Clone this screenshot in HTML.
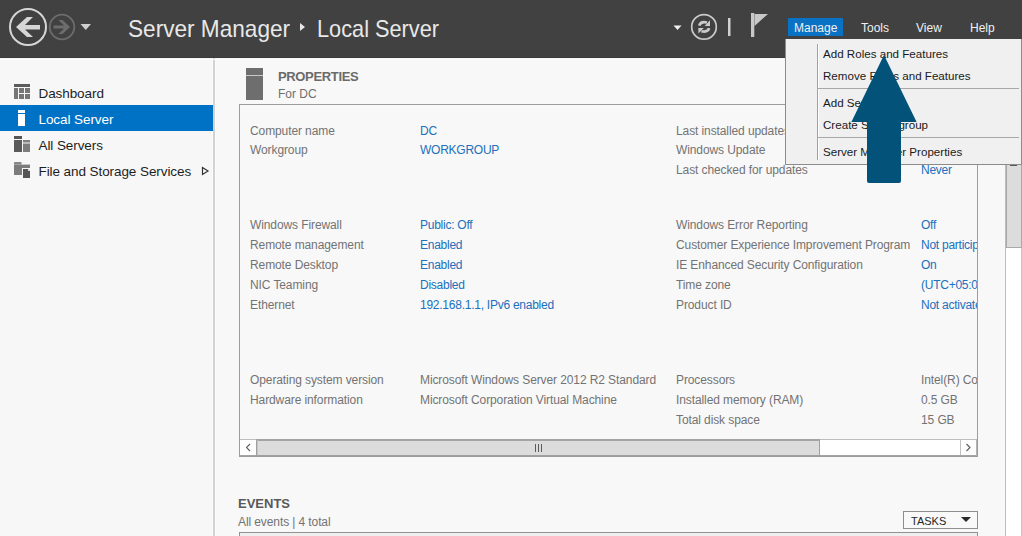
<!DOCTYPE html>
<html><head><meta charset="utf-8">
<style>
*{margin:0;padding:0;box-sizing:border-box}
html,body{width:1022px;height:536px;overflow:hidden;background:#f8f8f8;font-family:"Liberation Sans",sans-serif}
.a{position:absolute;white-space:nowrap}
#hdr{position:absolute;left:0;top:0;width:1022px;height:58px;background:#414141}
#hdrb{position:absolute;left:0;top:57px;width:1022px;height:1px;background:#3b3b3b}
#side{position:absolute;left:0;top:58px;width:213px;height:478px;background:#f7f7f7}
#sdiv{position:absolute;left:213px;top:58px;width:2px;height:478px;background:#d2d2d2}
.t{color:#e8e8e8;font-size:24px;line-height:24px}
.nav{font-size:13.5px;line-height:13.5px;letter-spacing:-0.08px;color:#1e1e1e}
.lbl{font-size:12px;line-height:12px;color:#737373;letter-spacing:-0.1px}
.val{font-size:12px;line-height:12px;color:#2070bc;letter-spacing:-0.25px}
.menu{font-size:11.6px;line-height:12px;color:#1a1a1a}
.lbl2{font-size:12px;line-height:12px;color:#737373;letter-spacing:-0.1px}
.mb{font-size:12px;line-height:12px;color:#f0f0f0}
</style></head><body>
<div id="hdr"></div><div id="hdrb"></div>
<!-- back/forward -->
<svg class="a" style="left:0;top:0" width="100" height="58">
  <circle cx="28" cy="27" r="18" fill="none" stroke="#d6d6d6" stroke-width="2"/>
  <polygon points="16,27 27,17 33,17 25,25 40,25 40,29.5 25,29.5 33,37 27,37" fill="#d6d6d6"/>
  <circle cx="62" cy="27" r="12.3" fill="none" stroke="#6c6c6c" stroke-width="1.8"/>
  <polygon points="70,27 62.6,20 58.4,20 64,25.6 53.5,25.6 53.5,28.6 64,28.6 58.4,34 62.6,34" fill="#6c6c6c"/>
  <polygon points="80.5,24 91,24 85.75,30" fill="#cfcfcf"/>
</svg>
<div class="a t" style="left:128px;top:17px;transform:scaleX(0.942);transform-origin:0 0">Server Manager</div>
<svg class="a" style="left:298px;top:20px" width="10" height="14"><polygon points="2,3 7,7 2,11" fill="#e8e8e8"/></svg>
<div class="a t" style="left:317px;top:17px;transform:scaleX(0.906);transform-origin:0 0">Local Server</div>
<!-- right header icons -->
<svg class="a" style="left:660px;top:0" width="120" height="58">
  <polygon points="13.5,25.5 21.5,25.5 17.5,30" fill="#f0f0f0"/>
  <circle cx="44" cy="26.9" r="12.3" fill="none" stroke="#cacaca" stroke-width="1.7"/>
  <path d="M39.2,25.6 Q40.7,21 47,22.6" fill="none" stroke="#cacaca" stroke-width="2.6"/>
  <polygon points="50,20.3 50,25.9 44.6,25.9" fill="#cacaca"/>
  <path d="M49.2,28.2 Q47.7,32.8 41.4,31.2" fill="none" stroke="#cacaca" stroke-width="2.6"/>
  <polygon points="38.4,33.5 38.4,27.9 43.8,27.9" fill="#cacaca"/>
  <rect x="68" y="18" width="2.5" height="18" fill="#d0d0d0"/>
  <rect x="91" y="13" width="3.3" height="24" fill="#c8c8c8"/>
  <polygon points="94.5,14 108,14 94.5,26" fill="#c8c8c8"/>
</svg>
<div class="a" style="left:788px;top:18px;width:55px;height:18px;background:#0a72c4"></div>
<div class="a mb" style="left:794px;top:22px">Manage</div>
<div class="a mb" style="left:861px;top:22px">Tools</div>
<div class="a mb" style="left:916px;top:22px">View</div>
<div class="a mb" style="left:970px;top:22px">Help</div>

<!-- sidebar -->
<div id="side"></div><div id="sdiv"></div>
<div class="a" style="left:0;top:59px;width:1022px;height:1px;background:#fcfcfc"></div>
<div class="a" style="left:212px;top:59px;width:1px;height:477px;background:#fcfcfc"></div>
<div class="a" style="left:215px;top:59px;width:1px;height:477px;background:#fcfcfc"></div>
<div class="a" style="left:0;top:105px;width:213px;height:26px;background:#0072c6"></div>
<svg class="a" style="left:0;top:80px" width="40" height="100">
  <rect x="14" y="4" width="16" height="3" fill="#5c5c5c"/>
  <rect x="14" y="8" width="4" height="11" fill="#767676"/>
  <rect x="19" y="8" width="5" height="5" fill="#767676"/>
  <rect x="25" y="8" width="5" height="5" fill="#767676"/>
  <rect x="19" y="14" width="5" height="5" fill="#767676"/>
  <rect x="25" y="14" width="5" height="5" fill="#767676"/>
  <rect x="18" y="30" width="7" height="3" fill="#fff"/>
  <rect x="18" y="34" width="7" height="12" fill="#fff"/>
  <rect x="14" y="56" width="8" height="3" fill="#555"/>
  <rect x="14" y="60" width="8" height="12" fill="#5a5a5a"/>
  <rect x="23" y="60" width="7" height="2.5" fill="#808080"/>
  <rect x="23" y="63.5" width="7" height="8.5" fill="#7c7c7c"/>
  <rect x="14" y="82" width="7.5" height="2.5" rx="0.6" fill="#878787"/>
  <rect x="14" y="84.6" width="16" height="10.4" fill="#7c7c7c"/>
  <rect x="22" y="88" width="9" height="11" fill="#f7f7f7"/>
  <polygon points="23,89 28,89 30,91 30,98 23,98" fill="#555"/>
  <polygon points="28,89 30,91 28,91" fill="#e0e0e0"/>
</svg>
<div class="a nav" style="left:38.5px;top:86.6px">Dashboard</div>
<div class="a nav" style="left:38.5px;top:112.6px;color:#fff">Local Server</div>
<div class="a nav" style="left:38.5px;top:138.6px">All Servers</div>
<div class="a nav" style="left:38.5px;top:164.6px">File and Storage Services</div>
<svg class="a" style="left:200px;top:165px" width="12" height="12"><polygon points="2.5,2.5 8,6 2.5,9.5" fill="none" stroke="#333" stroke-width="1.2"/></svg>

<!-- properties header -->
<svg class="a" style="left:246px;top:68px" width="17" height="32">
  <rect x="0" y="0" width="17" height="32" fill="#6e6e6e"/>
  <rect x="0" y="7" width="17" height="1" fill="#c8c8c8"/>
</svg>
<div class="a" style="left:278px;top:70px;font-size:13px;line-height:13px;letter-spacing:-0.35px;font-weight:bold;color:#6a6a6a">PROPERTIES</div>
<div class="a" style="left:278px;top:88px;font-size:12px;line-height:12px;color:#6f6f6f">For DC</div>

<!-- properties box -->
<div class="a" style="left:239px;top:104px;width:739px;height:353px;border:1px solid #9c9c9c;background:#f8f8f8"></div>


<!-- properties content -->
<div class="a" style="left:240px;top:105px;width:737px;height:334px;overflow:hidden">
<div class="a lbl" style="left:10px;top:20px">Computer name</div>
<div class="a val" style="left:180px;top:20px">DC</div>
<div class="a lbl" style="left:10px;top:39px">Workgroup</div>
<div class="a val" style="left:180px;top:39px">WORKGROUP</div>
<div class="a lbl" style="left:436px;top:20px">Last installed updates</div>
<div class="a lbl" style="left:436px;top:39px">Windows Update</div>
<div class="a lbl" style="left:436px;top:59px">Last checked for updates</div>
<div class="a val" style="left:681px;top:59px">Never</div>
<div class="a lbl" style="left:10px;top:114px">Windows Firewall</div>
<div class="a val" style="left:180px;top:114px">Public: Off</div>
<div class="a lbl" style="left:436px;top:114px">Windows Error Reporting</div>
<div class="a val" style="left:681px;top:114px">Off</div>
<div class="a lbl" style="left:10px;top:134px">Remote management</div>
<div class="a val" style="left:180px;top:134px">Enabled</div>
<div class="a lbl" style="left:436px;top:134px">Customer Experience Improvement Program</div>
<div class="a val" style="left:681px;top:134px">Not participating</div>
<div class="a lbl" style="left:10px;top:154px">Remote Desktop</div>
<div class="a val" style="left:180px;top:154px">Enabled</div>
<div class="a lbl" style="left:436px;top:154px">IE Enhanced Security Configuration</div>
<div class="a val" style="left:681px;top:154px">On</div>
<div class="a lbl" style="left:10px;top:174px">NIC Teaming</div>
<div class="a val" style="left:180px;top:174px">Disabled</div>
<div class="a lbl" style="left:436px;top:174px">Time zone</div>
<div class="a val" style="left:681px;top:174px">(UTC+05:00) Islamabad, Karachi</div>
<div class="a lbl" style="left:10px;top:194px">Ethernet</div>
<div class="a val" style="left:180px;top:194px">192.168.1.1, IPv6 enabled</div>
<div class="a lbl" style="left:436px;top:194px">Product ID</div>
<div class="a val" style="left:681px;top:194px">Not activated</div>
<div class="a lbl" style="left:10px;top:269px">Operating system version</div>
<div class="a lbl2" style="left:180px;top:269px">Microsoft Windows Server 2012 R2 Standard</div>
<div class="a lbl" style="left:436px;top:269px">Processors</div>
<div class="a lbl2" style="left:681px;top:269px">Intel(R) Core(TM) i5 CPU</div>
<div class="a lbl" style="left:10px;top:289px">Hardware information</div>
<div class="a lbl2" style="left:180px;top:289px">Microsoft Corporation Virtual Machine</div>
<div class="a lbl" style="left:436px;top:289px">Installed memory (RAM)</div>
<div class="a lbl2" style="left:681px;top:289px">0.5 GB</div>
<div class="a lbl" style="left:436px;top:309px">Total disk space</div>
<div class="a lbl2" style="left:681px;top:309px">15 GB</div>
</div>

<!-- h scrollbar -->
<div class="a" style="left:240px;top:439px;width:737px;height:17px;background:#fff;border-top:1px solid #bdbdbd;border-bottom:1px solid #a4a4a4"></div>
<svg class="a" style="left:240px;top:440px" width="16" height="15"><polyline points="10,4 6.5,7.5 10,11" fill="none" stroke="#5c5c5c" stroke-width="1.1"/></svg>
<div class="a" style="left:256px;top:439px;width:564px;height:17px;background:#dcdcdc;border:1px solid #a0a0a0;border-top:2px solid #a4a4a4"></div>
<div class="a" style="left:257px;top:440px;width:1px;height:15px;background:#c4c4c4"></div>
<div class="a" style="left:960px;top:440px;width:1px;height:15px;background:#c0c0c0"></div>
<svg class="a" style="left:961px;top:440px" width="16" height="15"><polyline points="5.5,4 9,7.5 5.5,11" fill="none" stroke="#5c5c5c" stroke-width="1.1"/></svg>
<div class="a" style="left:535px;top:444px;width:1px;height:8px;background:#5a5a5a"></div>
<div class="a" style="left:538px;top:444px;width:1px;height:8px;background:#5a5a5a"></div>
<div class="a" style="left:541px;top:444px;width:1px;height:8px;background:#5a5a5a"></div>
<div class="a" style="left:976px;top:439px;width:1px;height:17px;background:#b4b4b4"></div>

<!-- events -->
<div class="a" style="left:238px;top:497px;font-size:13px;line-height:13px;font-weight:bold;color:#595959">EVENTS</div>
<div class="a lbl" style="left:238px;top:516px">All events | 4 total</div>
<div class="a" style="left:903px;top:511px;width:75px;height:18px;border:1px solid #8e8e8e;background:#f9f9f9"></div>
<div class="a" style="left:911px;top:516px;font-size:11px;line-height:11px;color:#262626">TASKS</div>
<svg class="a" style="left:958px;top:514px" width="16" height="12"><polygon points="3,3 13,3 8,8" fill="#2a2a2a"/></svg>
<div class="a" style="left:239px;top:532px;width:739px;height:10px;border:1px solid #929292;background:#efefef"></div>

<!-- v scrollbar -->
<div class="a" style="left:1005px;top:58px;width:17px;height:478px;background:#fff;border-left:1px solid #bdbdbd;border-right:1px solid #c4c4c4"></div>
<div class="a" style="left:1006px;top:150px;width:16px;height:98px;background:#dcdcdc;border:1px solid #a9a9a9"></div>
<div class="a" style="left:1010px;top:165px;width:7px;height:1px;background:#585858"></div>

<!-- menu -->
<div class="a" style="left:785px;top:39px;width:237px;height:126px;background:#f0f0f0;border-left:1px solid #8c8c8c;border-bottom:1px solid #8c8c8c;border-right:1px solid #8c8c8c"></div>
<div class="a" style="left:817px;top:44px;width:1px;height:116px;background:#a0a0a0"></div>
<div class="a" style="left:818px;top:44px;width:1px;height:116px;background:#fff"></div>
<div class="a" style="left:817px;top:88px;width:202px;height:1px;background:#a8a8a8"></div>
<div class="a" style="left:817px;top:137px;width:202px;height:1px;background:#a8a8a8"></div>
<div class="a menu" style="left:823px;top:48px">Add Roles and Features</div>
<div class="a menu" style="left:823px;top:70px">Remove Roles and Features</div>
<div class="a menu" style="left:823px;top:97px">Add Servers</div>
<div class="a menu" style="left:823px;top:119px">Create Server group</div>
<div class="a menu" style="left:823px;top:146px">Server Manager Properties</div>

<!-- arrow -->
<svg class="a" style="left:840px;top:50px" width="90" height="140">
  <path d="M44,5 L76.6,72 L61,72 L61,131 Q61,133 59,133 L29,133 Q27,133 27,131 L27,72 L11.4,72 Z" fill="#02527a"/>
</svg>
</body></html>
